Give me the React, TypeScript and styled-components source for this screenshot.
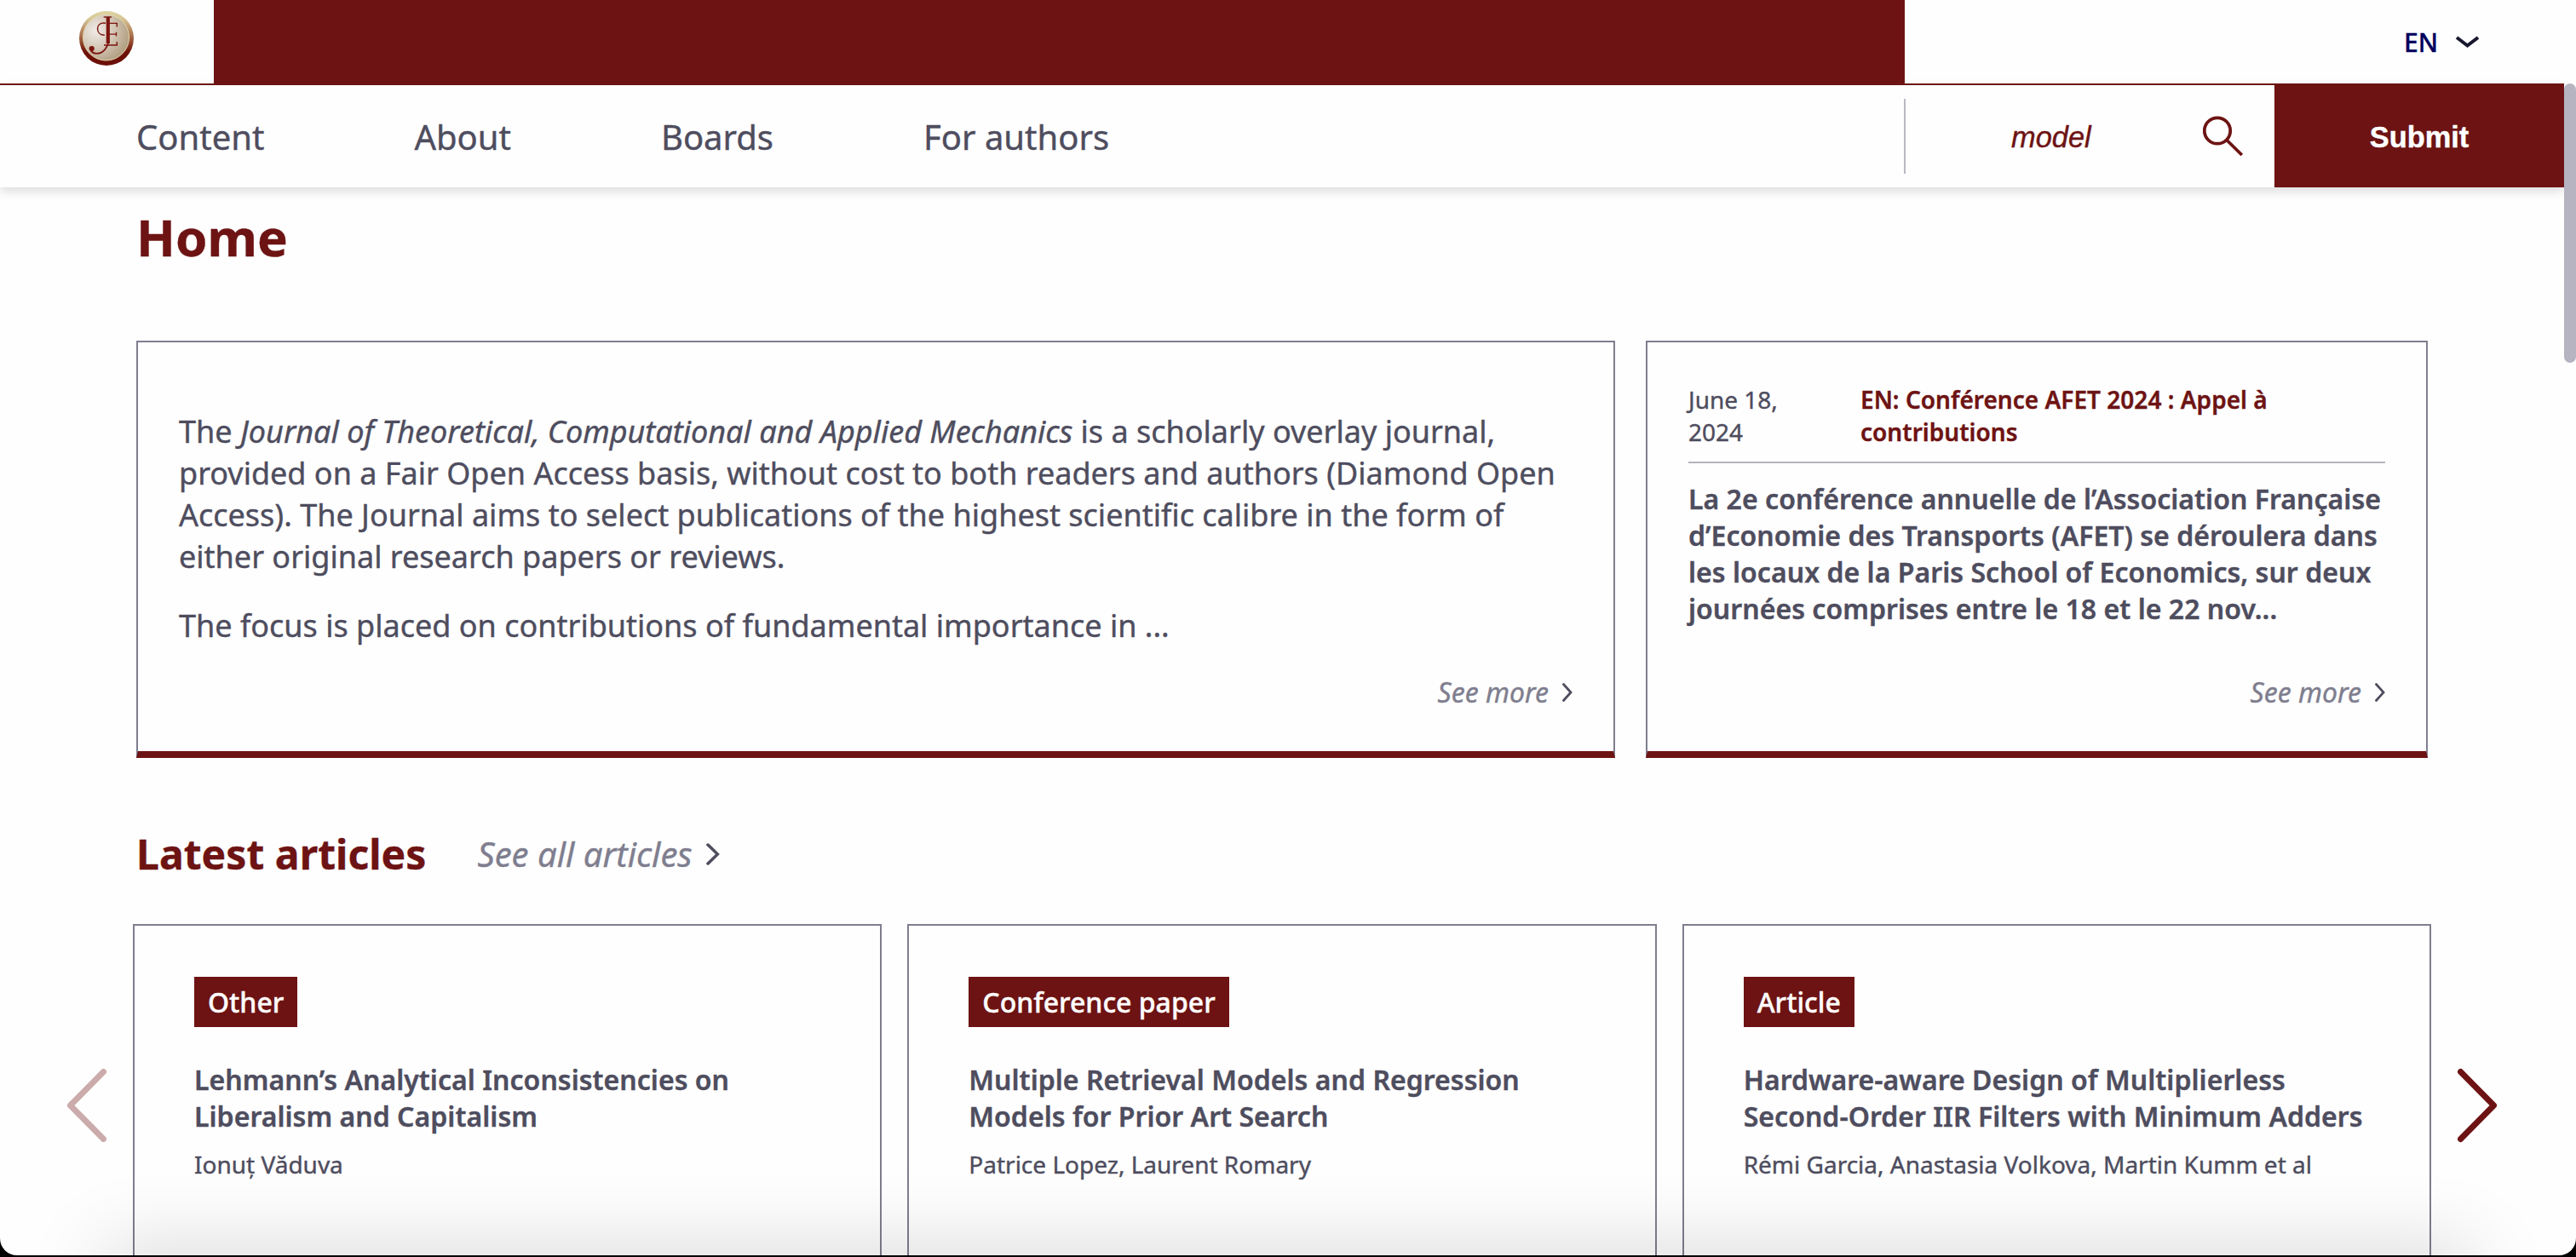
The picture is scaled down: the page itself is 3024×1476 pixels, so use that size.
import React from "react";
import styled, { createGlobalStyle } from "styled-components";

const maroon = "#6d1313";
const ink = "#4e4d5e";
const muted = "#7f7e8f";

const GlobalStyle = createGlobalStyle`
  * { box-sizing: border-box; }
  html, body { margin: 0; padding: 0; background: #000; overflow: hidden; }
  body {
    font-family: "Noto Sans", sans-serif;
    color: ${ink};
    -webkit-text-stroke: 0.4px currentColor;
  }
  h1, h2, h3, p { margin: 0; }
`;

const Window = styled.div`
  position: relative;
  width: 3024px;
  height: 1474px;
  overflow: hidden;
  background: #fefefe;
  border-radius: 0 0 20px 20px;
`;

const TopBar = styled.header`
  display: flex;
  height: 100px;
  background: #fefefe;
`;

const LogoCell = styled.div`
  width: 251px;
  padding: 13px 0 0 93px;
  border-bottom: 2px solid ${maroon};
`;

const LogoMark = styled.svg`
  display: block;
`;

const Banner = styled.div`
  width: 1985px;
  background: ${maroon};
`;

const LanguageCell = styled.div`
  width: 774px;
  border-bottom: 2px solid ${maroon};
  display: flex;
  align-items: center;
  justify-content: flex-end;
  gap: 20px;
  padding-right: 100px;
  padding-top: 2px;
`;

const Language = styled.span`
  font-size: 30px;
  line-height: 40px;
  font-weight: 500;
  color: #00005c;
`;

const NavBar = styled.nav`
  display: flex;
  width: 3010px;
  height: 120px;
  background: #fefefe;
  box-shadow: 0 4px 12px rgba(0, 0, 0, 0.15);
`;

const NavLinks = styled.div`
  width: 2235px;
  display: flex;
  align-items: center;
  padding-left: 160px;
  gap: 176px;
`;

const NavLink = styled.a`
  font-size: 40px;
  line-height: 54px;
  padding-top: 1px;
`;

const SearchBox = styled.div`
  width: 435px;
  display: flex;
  align-items: center;
  justify-content: space-between;
  padding-right: 36px;
`;

const SearchTerm = styled.div`
  flex: 1;
  height: 88px;
  border-left: 2px solid #b9b8c2;
  display: flex;
  align-items: center;
  padding-left: 124px;
  padding-top: 1px;
  font: italic 34.4px/40px "Liberation Sans", Arial, sans-serif;
  color: ${maroon};
`;

const SubmitButton = styled.button`
  width: 340px;
  height: 122px;
  margin-top: -2px;
  padding: 3px 0 0;
  border: 0;
  background: ${maroon};
  color: #fff;
  font: bold 34.4px/40px "Liberation Sans", Arial, sans-serif;
`;

const Scrollbar = styled.div`
  position: absolute;
  top: 98px;
  right: 0;
  width: 14px;
  height: 328px;
  border-radius: 7px;
  background: #b5b4c0;
`;

const Main = styled.main`
  padding: 17px 0 0 160px;
`;

const PageTitle = styled.h1`
  font-size: 60px;
  line-height: 82px;
  color: ${maroon};
`;

const Highlights = styled.section`
  display: grid;
  grid-template-columns: 1736px 918px;
  gap: 36px;
  margin-top: 81px;
`;

const Panel = styled.article`
  display: flex;
  flex-direction: column;
  height: 490px;
  padding: 48px;
  border: 2px solid ${muted};
  border-bottom: 8px solid ${maroon};
`;

const Intro = styled.div`
  display: flex;
  flex-direction: column;
  gap: 32px;
  padding-top: 32px;
  font-size: 36px;
  line-height: 49px;
`;

const NewsHead = styled.div`
  display: grid;
  grid-template-columns: 202px 1fr;
  padding-bottom: 16px;
  border-bottom: 2px solid #b5b4c0;
  font-size: 28px;
  line-height: 38px;
`;

const NewsDate = styled.span`
  padding-right: 60px;
`;

const NewsTitle = styled.span`
  font-weight: 600;
  letter-spacing: 0.02px;
  color: ${maroon};
  padding-right: 100px;
`;

const NewsBody = styled.p`
  margin-top: 20px;
  font-size: 32px;
  line-height: 43px;
  font-weight: 600;
  letter-spacing: 0.03px;
`;

const SeeMore = styled.a`
  display: flex;
  align-items: center;
  justify-content: flex-end;
  gap: 16px;
  margin-top: auto;
  font-size: 32px;
  line-height: 43px;
  font-style: italic;
  color: ${muted};
`;

const SectionHead = styled.div`
  display: flex;
  align-items: center;
  height: 66px;
  margin-top: 80px;
`;

const SectionTitle = styled.h2`
  font-size: 48px;
  line-height: 66px;
  letter-spacing: 0.05px;
  color: ${maroon};
`;

const SeeAll = styled.a`
  display: flex;
  align-items: center;
  gap: 16px;
  margin-left: 60px;
  font-size: 40px;
  line-height: 54px;
  font-style: italic;
  color: ${muted};
`;

const Carousel = styled.section`
  display: flex;
  align-items: flex-start;
  margin: 49px 0 0 -81px;
`;

const Arrow = styled.button<{ $disabled?: boolean }>`
  width: 46px;
  height: 88px;
  margin-top: 169px;
  padding: 0;
  border: 0;
  background: none;
  color: ${maroon};
  opacity: ${(p) => (p.$disabled ? 0.35 : 1)};
  svg { display: block; }
`;

const Slides = styled.div`
  width: 2698px;
  display: grid;
  grid-template-columns: repeat(3, 1fr);
  gap: 30px;
  margin: 0 31px;
`;

const Slide = styled.article`
  display: flex;
  flex-direction: column;
  align-items: flex-start;
  height: 560px;
  padding: 60px 70px;
  border: 2px solid ${muted};
`;

const Tag = styled.span`
  padding: 8px 16px;
  background: ${maroon};
  color: #fff;
  font-size: 32px;
  line-height: 43px;
  font-weight: 500;
`;

const SlideTitle = styled.h3`
  margin-top: 40px;
  font-size: 32px;
  line-height: 43px;
  font-weight: 600;
  letter-spacing: 0.03px;
`;

const Authors = styled.p`
  margin-top: 16px;
  font-size: 28px;
  line-height: 38px;
`;

const BottomShade = styled.div`
  position: absolute;
  left: 130px;
  right: 130px;
  bottom: -60px;
  height: 60px;
  box-shadow: 0 0 90px 10px rgba(0, 0, 0, 0.15);
`;

const Logo = () => (
  <LogoMark width="64" height="64" viewBox="0 0 64 64">
    <defs>
      <linearGradient id="rim" x1="0" y1="0" x2="0" y2="1">
        <stop offset="0" stopColor="#ddd3a0" />
        <stop offset="0.15" stopColor="#d5c594" />
        <stop offset="0.5" stopColor="#a0603f" />
        <stop offset="0.75" stopColor="#6e1108" />
        <stop offset="1" stopColor="#6a0f08" />
      </linearGradient>
      <radialGradient id="face" cx="0.28" cy="0.35" r="0.75">
        <stop offset="0" stopColor="#f0ebe6" />
        <stop offset="0.5" stopColor="#d5c8b8" />
        <stop offset="1" stopColor="#b19e80" />
      </radialGradient>
    </defs>
    <circle cx="32" cy="32" r="32" fill="url(#rim)" />
    <circle cx="31.500" cy="31" r="27" fill="url(#face)" stroke="#e3d9b0" strokeWidth="1" />
    <g fill="none" stroke="#7d150f">
      <path d="M28.700 7H38" strokeWidth="1.400" />
      <path d="M33.800 7V38" strokeWidth="4.200" />
      <path d="M34.500 36C33.500 42 28.500 49.800 21 49.800C17 49.800 14 48 13.500 45" strokeWidth="1.700" />
      <path d="M31 14.300C24.500 13.200 21.500 16.500 21.500 20.500C21.500 25.500 25 28.300 29.800 28.300" strokeWidth="1.500" />
      <path d="M34 14.400H44.300V18.500M35 27.100H43.500M43.500 24.800V29.500M29 40H44.300V36" strokeWidth="1.400" />
    </g>
    <circle cx="14.700" cy="44" r="3.100" fill="#7d150f" />
  </LogoMark>
);

const SmallChevron = ({ large }: { large?: boolean }) => (
  <svg width={large ? 16 : 12} height={large ? 28 : 24} viewBox="0 0 12 24" preserveAspectRatio="none">
    <path d="M1.500 2.500L10 12L1.500 21.500" fill="none" stroke={ink} strokeWidth="2.800" strokeLinecap="round" />
  </svg>
);

const SearchIcon = () => (
  <svg width="48" height="48" viewBox="0 0 48 48" fill="none" stroke={maroon} strokeWidth="3.800">
    <circle cx="17" cy="17.500" r="15.200" />
    <path d="M28 28.500L45.800 46" />
  </svg>
);

const slides = [
  { tag: "Other", title: ["Lehmann’s Analytical Inconsistencies on", "Liberalism and Capitalism"], authors: "Ionuț Văduva" },
  { tag: "Conference paper", title: ["Multiple Retrieval Models and Regression", "Models for Prior Art Search"], authors: "Patrice Lopez, Laurent Romary" },
  { tag: "Article", title: ["Hardware-aware Design of Multiplierless", "Second-Order IIR Filters with Minimum Adders"], authors: "Rémi Garcia, Anastasia Volkova, Martin Kumm et al" },
];

export default function App() {
  return (
    <>
      <GlobalStyle />
      <Window>
        <TopBar>
          <LogoCell><Logo /></LogoCell>
          <Banner />
          <LanguageCell>
            <Language>EN</Language>
            <svg width="28" height="16" viewBox="0 0 28 16" fill="none">
              <path d="M2 2L14.500 11.500L27 2" stroke="#17172e" strokeWidth="4" />
            </svg>
          </LanguageCell>
        </TopBar>
        <NavBar>
          <NavLinks>
            <NavLink>Content</NavLink>
            <NavLink>About</NavLink>
            <NavLink>Boards</NavLink>
            <NavLink>For authors</NavLink>
          </NavLinks>
          <SearchBox>
            <SearchTerm>model</SearchTerm>
            <SearchIcon />
          </SearchBox>
          <SubmitButton>Submit</SubmitButton>
        </NavBar>
        <Main>
          <PageTitle>Home</PageTitle>
          <Highlights>
            <Panel>
              <Intro>
                <p>
                  The <em>Journal of Theoretical, Computational and Applied Mechanics</em> is a scholarly overlay journal,<br />
                  provided on a Fair Open Access basis, without cost to both readers and authors (Diamond Open<br />
                  Access). The Journal aims to select publications of the highest scientific calibre in the form of<br />
                  either original research papers or reviews.
                </p>
                <p>The focus is placed on contributions of fundamental importance in ...</p>
              </Intro>
              <SeeMore>See more <SmallChevron /></SeeMore>
            </Panel>
            <Panel>
              <NewsHead>
                <NewsDate>June 18, 2024</NewsDate>
                <NewsTitle>EN: Conférence AFET 2024 : Appel à contributions</NewsTitle>
              </NewsHead>
              <NewsBody>
                La 2e conférence annuelle de l’Association Française<br />
                d’Economie des Transports (AFET) se déroulera dans<br />
                les locaux de la Paris School of Economics, sur deux<br />
                journées comprises entre le 18 et le 22 nov...
              </NewsBody>
              <SeeMore>See more <SmallChevron /></SeeMore>
            </Panel>
          </Highlights>
          <SectionHead>
            <SectionTitle>Latest articles</SectionTitle>
            <SeeAll>See all articles <SmallChevron large /></SeeAll>
          </SectionHead>
          <Carousel>
            <Arrow $disabled>
              <svg width="46" height="88" viewBox="0 0 46 88" fill="none" stroke="currentColor" strokeWidth="7" strokeLinecap="round" strokeLinejoin="round">
                <path d="M42.500 4.500L3.500 44L42.500 83.500" />
              </svg>
            </Arrow>
            <Slides>
              {slides.map((s) => (
                <Slide key={s.tag}>
                  <Tag>{s.tag}</Tag>
                  <SlideTitle>{s.title[0]}<br />{s.title[1]}</SlideTitle>
                  <Authors>{s.authors}</Authors>
                </Slide>
              ))}
            </Slides>
            <Arrow>
              <svg width="46" height="88" viewBox="0 0 46 88" fill="none" stroke="currentColor" strokeWidth="7" strokeLinecap="round" strokeLinejoin="round">
                <path d="M3.500 4.500L42.500 44L3.500 83.500" />
              </svg>
            </Arrow>
          </Carousel>
        </Main>
        <BottomShade />
        <Scrollbar />
      </Window>
    </>
  );
}
